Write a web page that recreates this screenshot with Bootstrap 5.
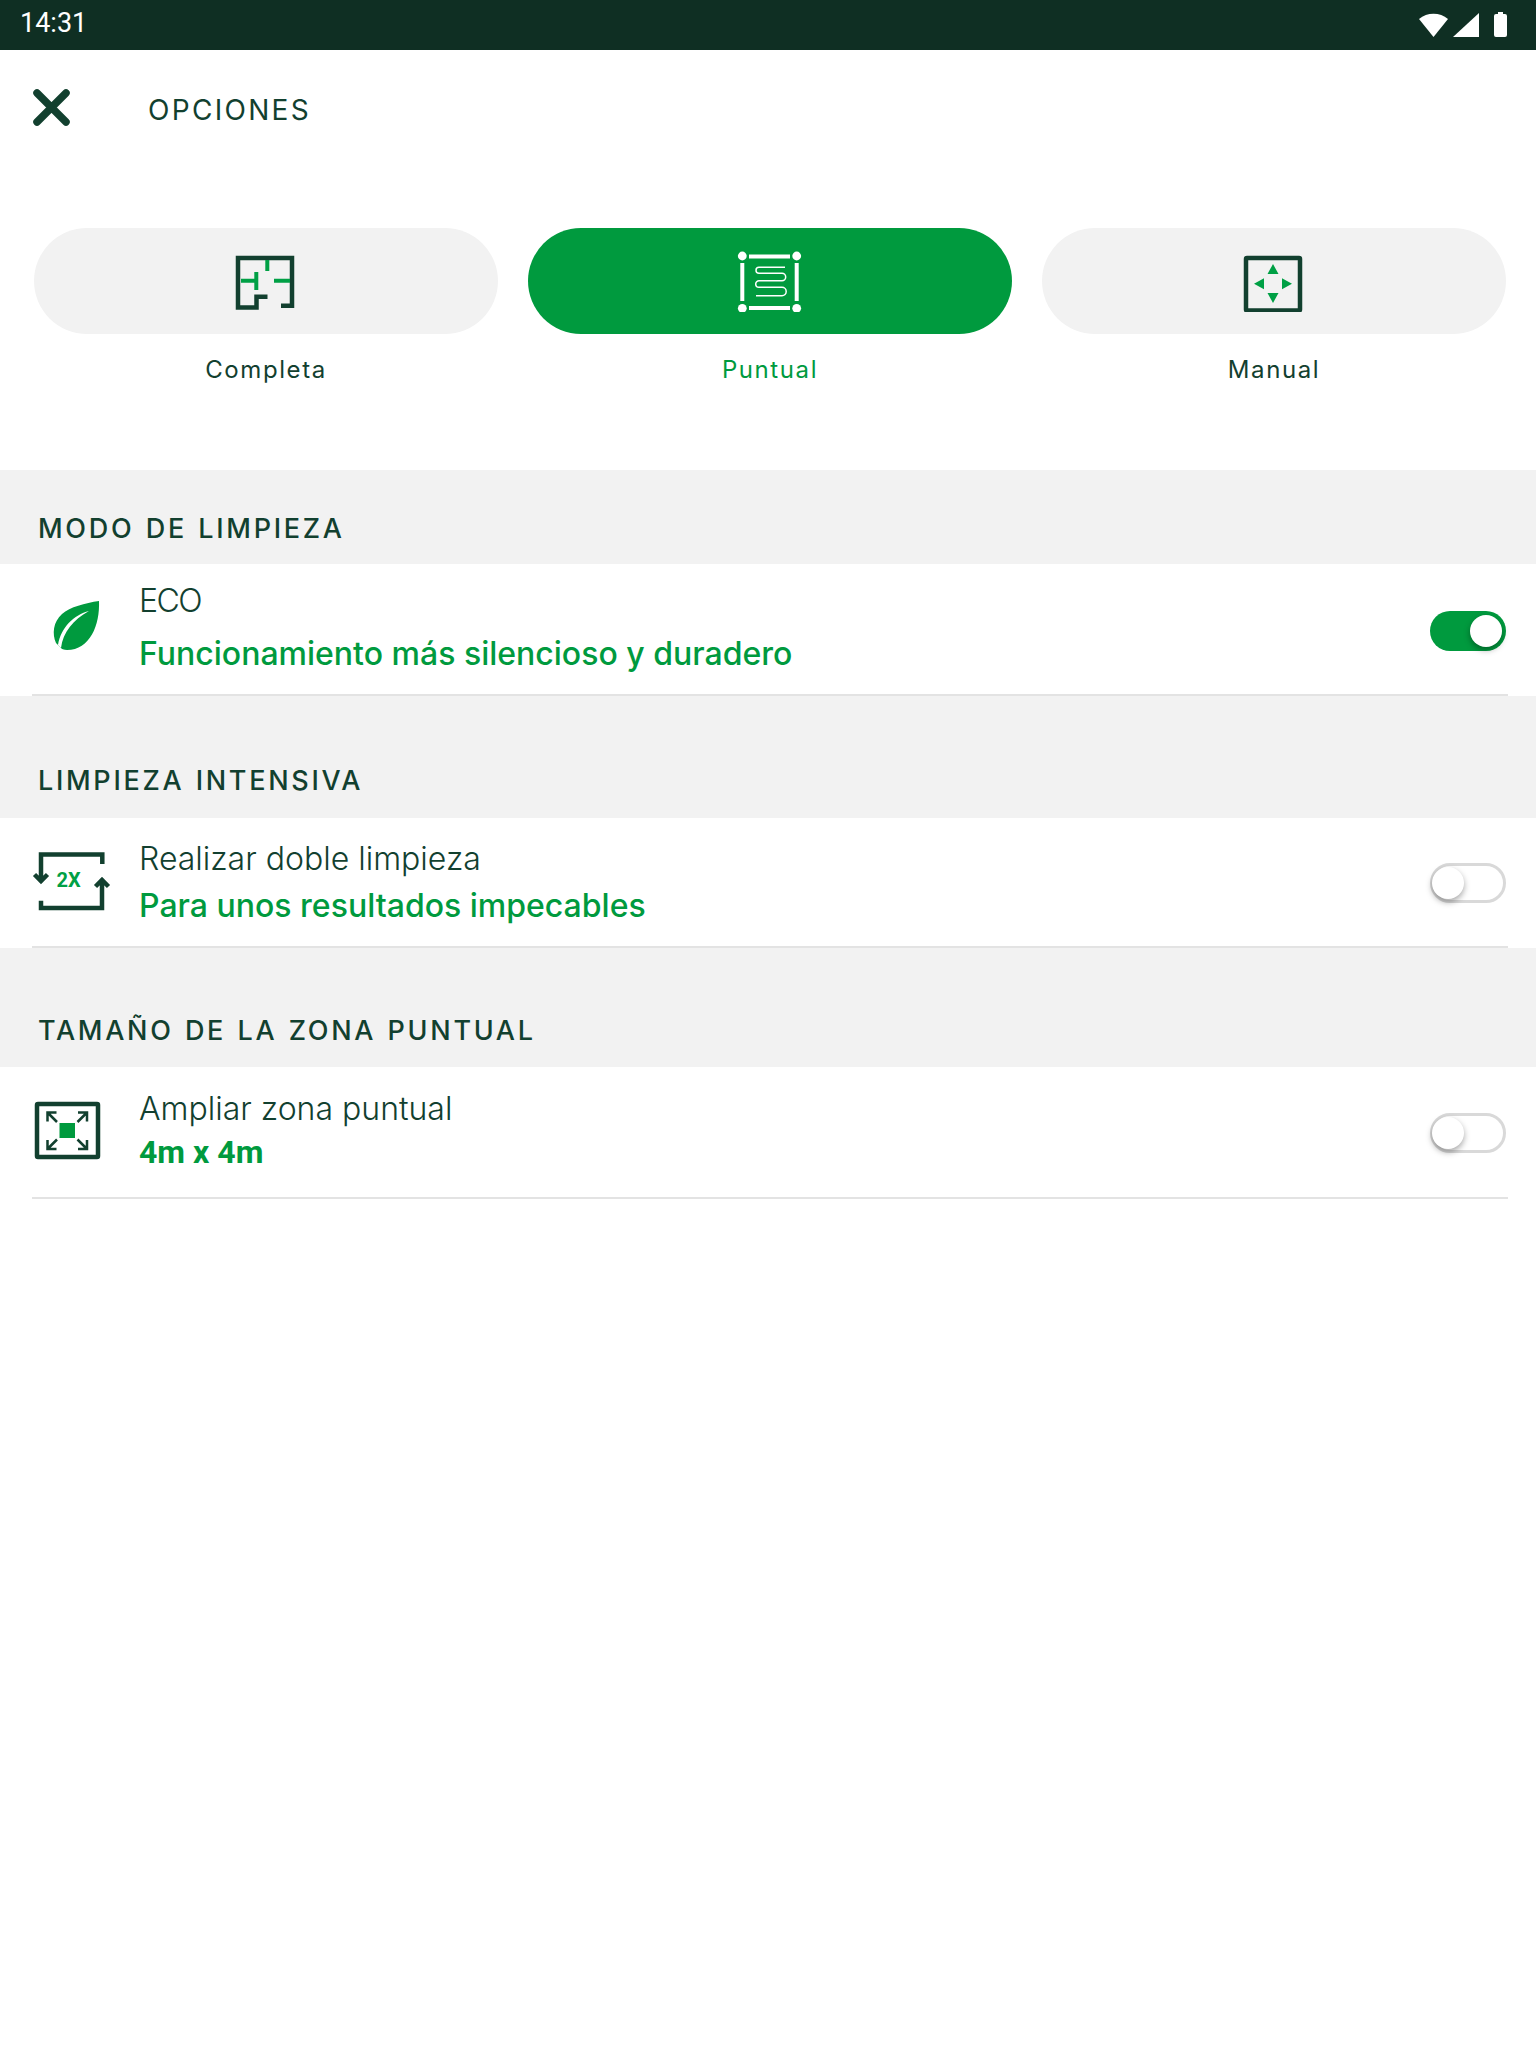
<!DOCTYPE html>
<html lang="es">
<head>
    <meta charset="UTF-8">
    <meta name="viewport" content="width=device-width, initial-scale=1.0">
    <title>Opciones</title>
  <link href="https://cdn.jsdelivr.net/npm/bootstrap@5.3.3/dist/css/bootstrap.min.css" rel="stylesheet">
  <script src="https://cdn.jsdelivr.net/npm/bootstrap@5.3.3/dist/js/bootstrap.bundle.min.js"></script>
  <style>
    body { font-family: Inter, "Liberation Sans", sans-serif; color: #12402f; background: #fff; min-height: 2048px; }
    .status-bar { height: 50px; background: #0f2f23; color: #fff; font-family: Roboto, sans-serif; font-size: 27px; padding: 0 29px 0 20px; }
    .status-time { margin-top: -4px; }
    .top-bar { height: 120px; padding-left: 33px; }
    .top-bar svg { margin-top: -6px; }
    .top-title { font-size: 28px; letter-spacing: 2.3px; margin-left: 78px; margin-top: -1px; line-height: 1; }
    .modes { padding: 58px 30px 0 34px; gap: 30px; height: 300px; }
    .mode-side { width: 464px; }
    .mode-mid { width: 484px; }
    .mode-pill { height: 106px; background: #f2f2f2; }
    .mode-mid .mode-pill { background: #009a3e; }
    .mode-label { font-size: 24px; letter-spacing: 1.6px; margin-top: 21px; line-height: 30px; }
    .mode-mid .mode-label { color: #009a3e; }
    .sect-head { background: #f2f2f2; padding-left: 38px; font-size: 27px; letter-spacing: 2.7px; word-spacing: 1.5px; line-height: 32px; padding-bottom: 19px; font-weight: 500; }
    .h-one { height: 94px; }
    .h-two { height: 122px; padding-bottom: 21px; }
    .h-three { height: 119px; padding-bottom: 20px; }
    .opt-row { padding-left: 30px; padding-right: 30px; background: #fff; }
    .opt-row::after { content: ""; position: absolute; left: 32px; right: 28px; bottom: 0; height: 2px; background: #e3e3e3; }
    .r-one { height: 132px; }
    .r-two { height: 130px; }
    .r-three { height: 132px; }
    .opt-icon { width: 109px; height: 70px; flex: none; }
    .opt-title { font-size: 32px; font-weight: 300; line-height: 40px; }
    .opt-sub { font-size: 32px; font-weight: 500; color: #009a3e; line-height: 40px; }
    .opt-text { align-self: flex-start; }
    .r-one .opt-text { padding-top: 17px; }
    .r-one .opt-title { letter-spacing: -1.5px; }
    .r-one .opt-sub { margin-top: 13px; }
    .r-two .opt-text { padding-top: 21px; }
    .r-two .opt-sub { margin-top: 7px; }
    .r-three .opt-text { padding-top: 22px; }
    .r-three .opt-sub { margin-top: 3px; font-family: Roboto, sans-serif; font-weight: 700; font-size: 32px; }
    .sw-track { width: 76px; height: 40px; flex: none; border-radius: 20px; padding: 0 4px; }
    .sw-on { background: #009a3e; justify-content: flex-end; margin-top: 2px; }
    .sw-off { background: #fff; border: 3px solid #d9d9d9; padding: 0; }
    .sw-off .sw-knob { margin-left: -1px; }
    .sw-knob { width: 32px; height: 32px; border-radius: 50%; background: #fff; box-shadow: 0 3px 6px rgba(0,0,0,.35); }
    .dark-line { fill: none; stroke: #12402f; stroke-width: 4.5; }
    .green-line { fill: none; stroke: #00a045; stroke-width: 4; }
    .white-line { fill: none; stroke: #fff; stroke-width: 4; }
  </style>
</head>
<body>

    <!-- Status bar -->
    <div class="status-bar d-flex align-items-center justify-content-between">
        <span class="status-time">14:31</span>
        <svg width="88" height="26" viewBox="1419 10 88 26">
            <path d="M1419 17 C1427 10 1440 10 1448 17 L1433.5 35 Z" fill="#fff"/>
            <path d="M1479 11 V35 H1453 Z" fill="#fff"/>
            <path d="M1498 10 h5 v2 h2 a2 2 0 0 1 2 2 v19 a2 2 0 0 1 -2 2 h-9 a2 2 0 0 1 -2 -2 v-19 a2 2 0 0 1 2 -2 h2 Z" fill="#fff"/>
        </svg>
    </div>

    <!-- Header -->
    <div class="top-bar d-flex align-items-center">
        <svg width="37" height="37" viewBox="0 0 37 37">
            <path d="M4 4 L33 33 M33 4 L4 33" fill="none" stroke="#12402f" stroke-width="7.5" stroke-linecap="round"/>
        </svg>
        <div class="top-title">OPCIONES</div>
    </div>

    <!-- Cleaning modes -->
    <div class="modes d-flex">
        <div class="mode-side text-center">
            <div class="mode-pill rounded-pill d-flex align-items-center justify-content-center">
                <svg width="68" height="62" viewBox="232 250 68 62">
                    <path class="dark-line" d="M281 305.7 H292 V258 H238 V307.5 H256.5 V296.7 H267.5"/>
                    <path class="green-line" d="M267.3 260 V271 M256.3 272 V290 M241 280.7 H255 M274 280.7 H290"/>
                </svg>
            </div>
            <div class="mode-label">Completa</div>
        </div>
        <div class="mode-mid text-center">
            <div class="mode-pill rounded-pill d-flex align-items-center justify-content-center">
                <svg width="68" height="62" viewBox="736 250 68 62">
                    <circle cx="742.3" cy="256" r="4.4" fill="#fff"/>
                    <circle cx="796.7" cy="256" r="4.4" fill="#fff"/>
                    <circle cx="742.3" cy="308.3" r="4.4" fill="#fff"/>
                    <circle cx="796.7" cy="308.3" r="4.4" fill="#fff"/>
                    <path class="white-line" d="M749 256.5 H790 M749 308 H790 M742.3 263 V301 M796.7 263 V301"/>
                    <path d="M785 267.3 H759 a3 3 0 0 0 0 6 H782 a3.7 3.7 0 0 1 0 7.4 H759 a3.3 3.3 0 0 0 0 6.6 H782 a4.2 4.2 0 0 1 0 8.4 H756" fill="none" stroke="#fff" stroke-width="1.5"/>
                </svg>
            </div>
            <div class="mode-label">Puntual</div>
        </div>
        <div class="mode-side text-center">
            <div class="mode-pill rounded-pill d-flex align-items-center justify-content-center">
                <svg width="68" height="62" viewBox="1240 250 68 62">
                    <rect class="dark-line" x="1246" y="258" width="54" height="52.5" rx="1"/>
                    <path d="M1273 264 L1278.5 274 H1267.5 Z M1273 303 L1278.5 293 H1267.5 Z M1254 283.7 L1264 278.2 V289.2 Z M1292 283.7 L1282 278.2 V289.2 Z" fill="#00a045"/>
                </svg>
            </div>
            <div class="mode-label">Manual</div>
        </div>
    </div>

    <!-- Modo de limpieza -->
    <div class="sect-head h-one d-flex align-items-end">MODO DE LIMPIEZA</div>
    <div class="opt-row r-one d-flex align-items-center position-relative">
        <svg class="opt-icon" viewBox="30 595 109 70">
            <path d="M99 601 C100 625 90 650 67 650 C64 650 61 649 60 647 L56 643 C52 634 53 622 62 614 C70 607 85 603 99 601 Z" fill="#009a3e"/>
            <path d="M89 611 C74 615 61 627 58 645 L61 648 C63 632 73 620 89 611 Z" fill="#fff"/>
        </svg>
        <div class="opt-text">
            <div class="opt-title">ECO</div>
            <div class="opt-sub">Funcionamiento más silencioso y duradero</div>
        </div>
        <div class="sw-track sw-on d-flex align-items-center ms-auto"><div class="sw-knob"></div></div>
    </div>

    <!-- Limpieza intensiva -->
    <div class="sect-head h-two d-flex align-items-end">LIMPIEZA INTENSIVA</div>
    <div class="opt-row r-two d-flex align-items-center position-relative">
        <svg class="opt-icon" viewBox="30 848 109 70">
            <path class="dark-line" d="M102.3 864 V854.5 H41 V880 M34.5 874.5 L41 881 L47.5 874.5 M41 900.7 V908 H102 V882 M95.5 886.5 L102 880 L108.5 886.5"/>
            <text x="56.5" y="887" font-family="Roboto, sans-serif" font-size="20" font-weight="700" fill="#00a045">2X</text>
        </svg>
        <div class="opt-text">
            <div class="opt-title">Realizar doble limpieza</div>
            <div class="opt-sub">Para unos resultados impecables</div>
        </div>
        <div class="sw-track sw-off d-flex align-items-center ms-auto"><div class="sw-knob"></div></div>
    </div>

    <!-- Zona puntual -->
    <div class="sect-head h-three d-flex align-items-end">TAMAÑO DE LA ZONA PUNTUAL</div>
    <div class="opt-row r-three d-flex align-items-center position-relative">
        <svg class="opt-icon" viewBox="30 1098 109 70">
            <rect class="dark-line" x="37" y="1104" width="61" height="53" rx="1"/>
            <rect x="59.5" y="1123" width="15.5" height="15" fill="#009a3e"/>
            <path d="M47.5 1121.5 V1112.5 H56.5 M47.5 1112.5 L57 1122 M87 1121.5 V1112.5 H78 M87 1112.5 L77.5 1122 M47.5 1140 V1149 H56.5 M47.5 1149 L57 1139.5 M87 1140 V1149 H78 M87 1149 L77.5 1139.5" fill="none" stroke="#12402f" stroke-width="2.5"/>
        </svg>
        <div class="opt-text">
            <div class="opt-title">Ampliar zona puntual</div>
            <div class="opt-sub">4m x 4m</div>
        </div>
        <div class="sw-track sw-off d-flex align-items-center ms-auto"><div class="sw-knob"></div></div>
    </div>

</body>
</html>
